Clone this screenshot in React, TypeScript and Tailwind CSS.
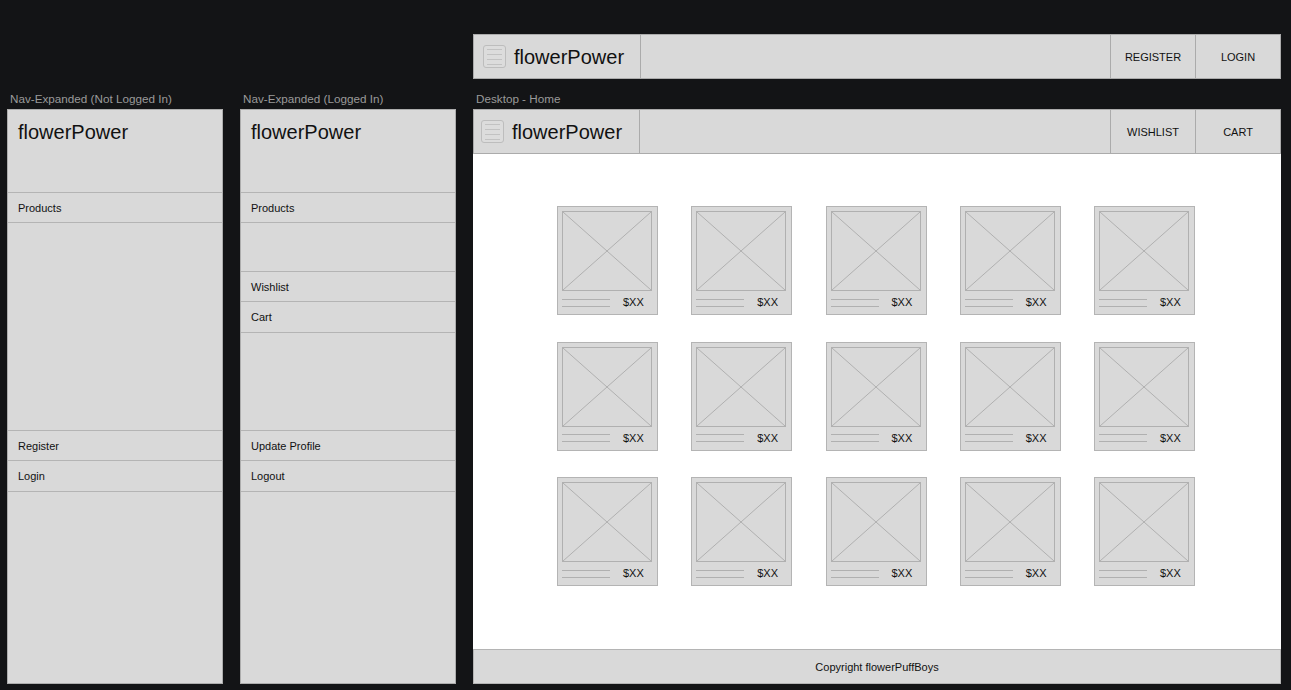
import React from "react";

const font = { fontFamily: '"Liberation Sans", Arial, sans-serif' };

function MenuIcon() {
  return (
    <div className="w-[23px] h-[23px] rounded-[3px] border border-[#bdbdbd] bg-[#dcdcdc] flex flex-col justify-center gap-[4px] px-[3px]">
      <div className="h-px bg-[#c2c2c2]" />
      <div className="h-px bg-[#c2c2c2]" />
      <div className="h-px bg-[#c2c2c2]" />
      <div className="h-px bg-[#c2c2c2]" />
    </div>
  );
}

function Header({ buttons, logoCls }: { buttons: string[]; logoCls: string }) {
  return (
    <div className="h-[45px] flex border border-[#ababab] bg-[#d9d9d9]">
      <div className={`flex items-center gap-[8px] border-r border-[#ababab] ${logoCls}`}>
        <MenuIcon />
        <span className="text-[20px] text-[#111] leading-none">flowerPower</span>
      </div>
      <div className="flex-1" />
      {buttons.map((b) => (
        <div
          key={b}
          className="w-[85px] border-l border-[#ababab] flex items-center justify-center pt-[2px] text-[11px] text-[#111]"
        >
          {b}
        </div>
      ))}
    </div>
  );
}

function Label({ text }: { text: string }) {
  return (
    <div className="h-[30px] flex items-end pb-[3px] pl-[3px] text-[11.7px] leading-[14px] text-[#9a9a9a]">
      {text}
    </div>
  );
}

type Row = { h: string; text?: string };

function NavPanel({ rows }: { rows: Row[] }) {
  return (
    <div className="h-[575px] bg-[#d9d9d9] border border-[#adadad] flex flex-col">
      <div className="h-[83px] border-b border-[#b4b4b4] pl-[10px] pt-[10px]">
        <span className="text-[20px] leading-[24px] text-[#111]">flowerPower</span>
      </div>
      {rows.map((r, i) => (
        <div
          key={i}
          className={`${r.h} border-b border-[#b4b4b4] flex items-center pl-[10px] pt-px text-[11px] text-[#111]`}
        >
          {r.text}
        </div>
      ))}
    </div>
  );
}

function Card() {
  return (
    <div className="w-[101px] h-[109px] bg-[#d9d9d9] border border-[#b4b4b4] p-[4px] flex flex-col">
      <div className="h-[80px] w-[90px] border border-[#b0b0b0]">
        <svg width="100%" height="100%" viewBox="0 0 100 100" preserveAspectRatio="none">
          <line x1="0" y1="0" x2="100" y2="100" stroke="#b0b0b0" strokeWidth="1" vectorEffect="non-scaling-stroke" />
          <line x1="100" y1="0" x2="0" y2="100" stroke="#b0b0b0" strokeWidth="1" vectorEffect="non-scaling-stroke" />
        </svg>
      </div>
      <div className="flex items-center mt-[4px]">
        <div className="w-[48px] flex flex-col gap-[6px] mt-[1px]">
          <div className="h-px bg-[#b0b0b0]" />
          <div className="h-px bg-[#b0b0b0]" />
        </div>
        <span className="ml-[13px] text-[11px] leading-[14px] text-[#111]">$XX</span>
      </div>
    </div>
  );
}

export default function App() {
  return (
    <div className="w-[1291px] h-[690px] overflow-hidden bg-[#131416] flex gap-[17px] pl-[7px]" style={font}>
      <div className="w-[216px] pt-[79px]">
        <Label text="Nav-Expanded (Not Logged In)" />
        <NavPanel
          rows={[
            { h: "h-[30px]", text: "Products" },
            { h: "h-[208px]" },
            { h: "h-[30px]", text: "Register" },
            { h: "h-[31px]", text: "Login" },
          ]}
        />
      </div>
      <div className="w-[216px] pt-[79px]">
        <Label text="Nav-Expanded (Logged In)" />
        <NavPanel
          rows={[
            { h: "h-[30px]", text: "Products" },
            { h: "h-[49px]" },
            { h: "h-[30px]", text: "Wishlist" },
            { h: "h-[31px]", text: "Cart" },
            { h: "h-[98px]" },
            { h: "h-[30px]", text: "Update Profile" },
            { h: "h-[31px]", text: "Logout" },
          ]}
        />
      </div>
      <div className="w-[808px] pt-[34px]">
        <Header buttons={["REGISTER", "LOGIN"]} logoCls="w-[167px] pl-[9px]" />
        <Label text="Desktop - Home" />
        <div className="h-[575px] flex flex-col bg-white">
          <Header buttons={["WISHLIST", "CART"]} logoCls="w-[166px] pl-[7px]" />
          <div className="flex-1 pl-[84px] pt-[52px]">
            <div className="grid grid-cols-[repeat(5,101px)] gap-x-[33.25px] gap-y-[26.5px]">
              {Array.from({ length: 15 }).map((_, i) => (
                <Card key={i} />
              ))}
            </div>
          </div>
          <div className="h-[35px] bg-[#d9d9d9] border border-[#b4b4b4] flex items-center justify-center pt-[2px] text-[11px] text-[#111]">
            Copyright flowerPuffBoys
          </div>
        </div>
      </div>
    </div>
  );
}
